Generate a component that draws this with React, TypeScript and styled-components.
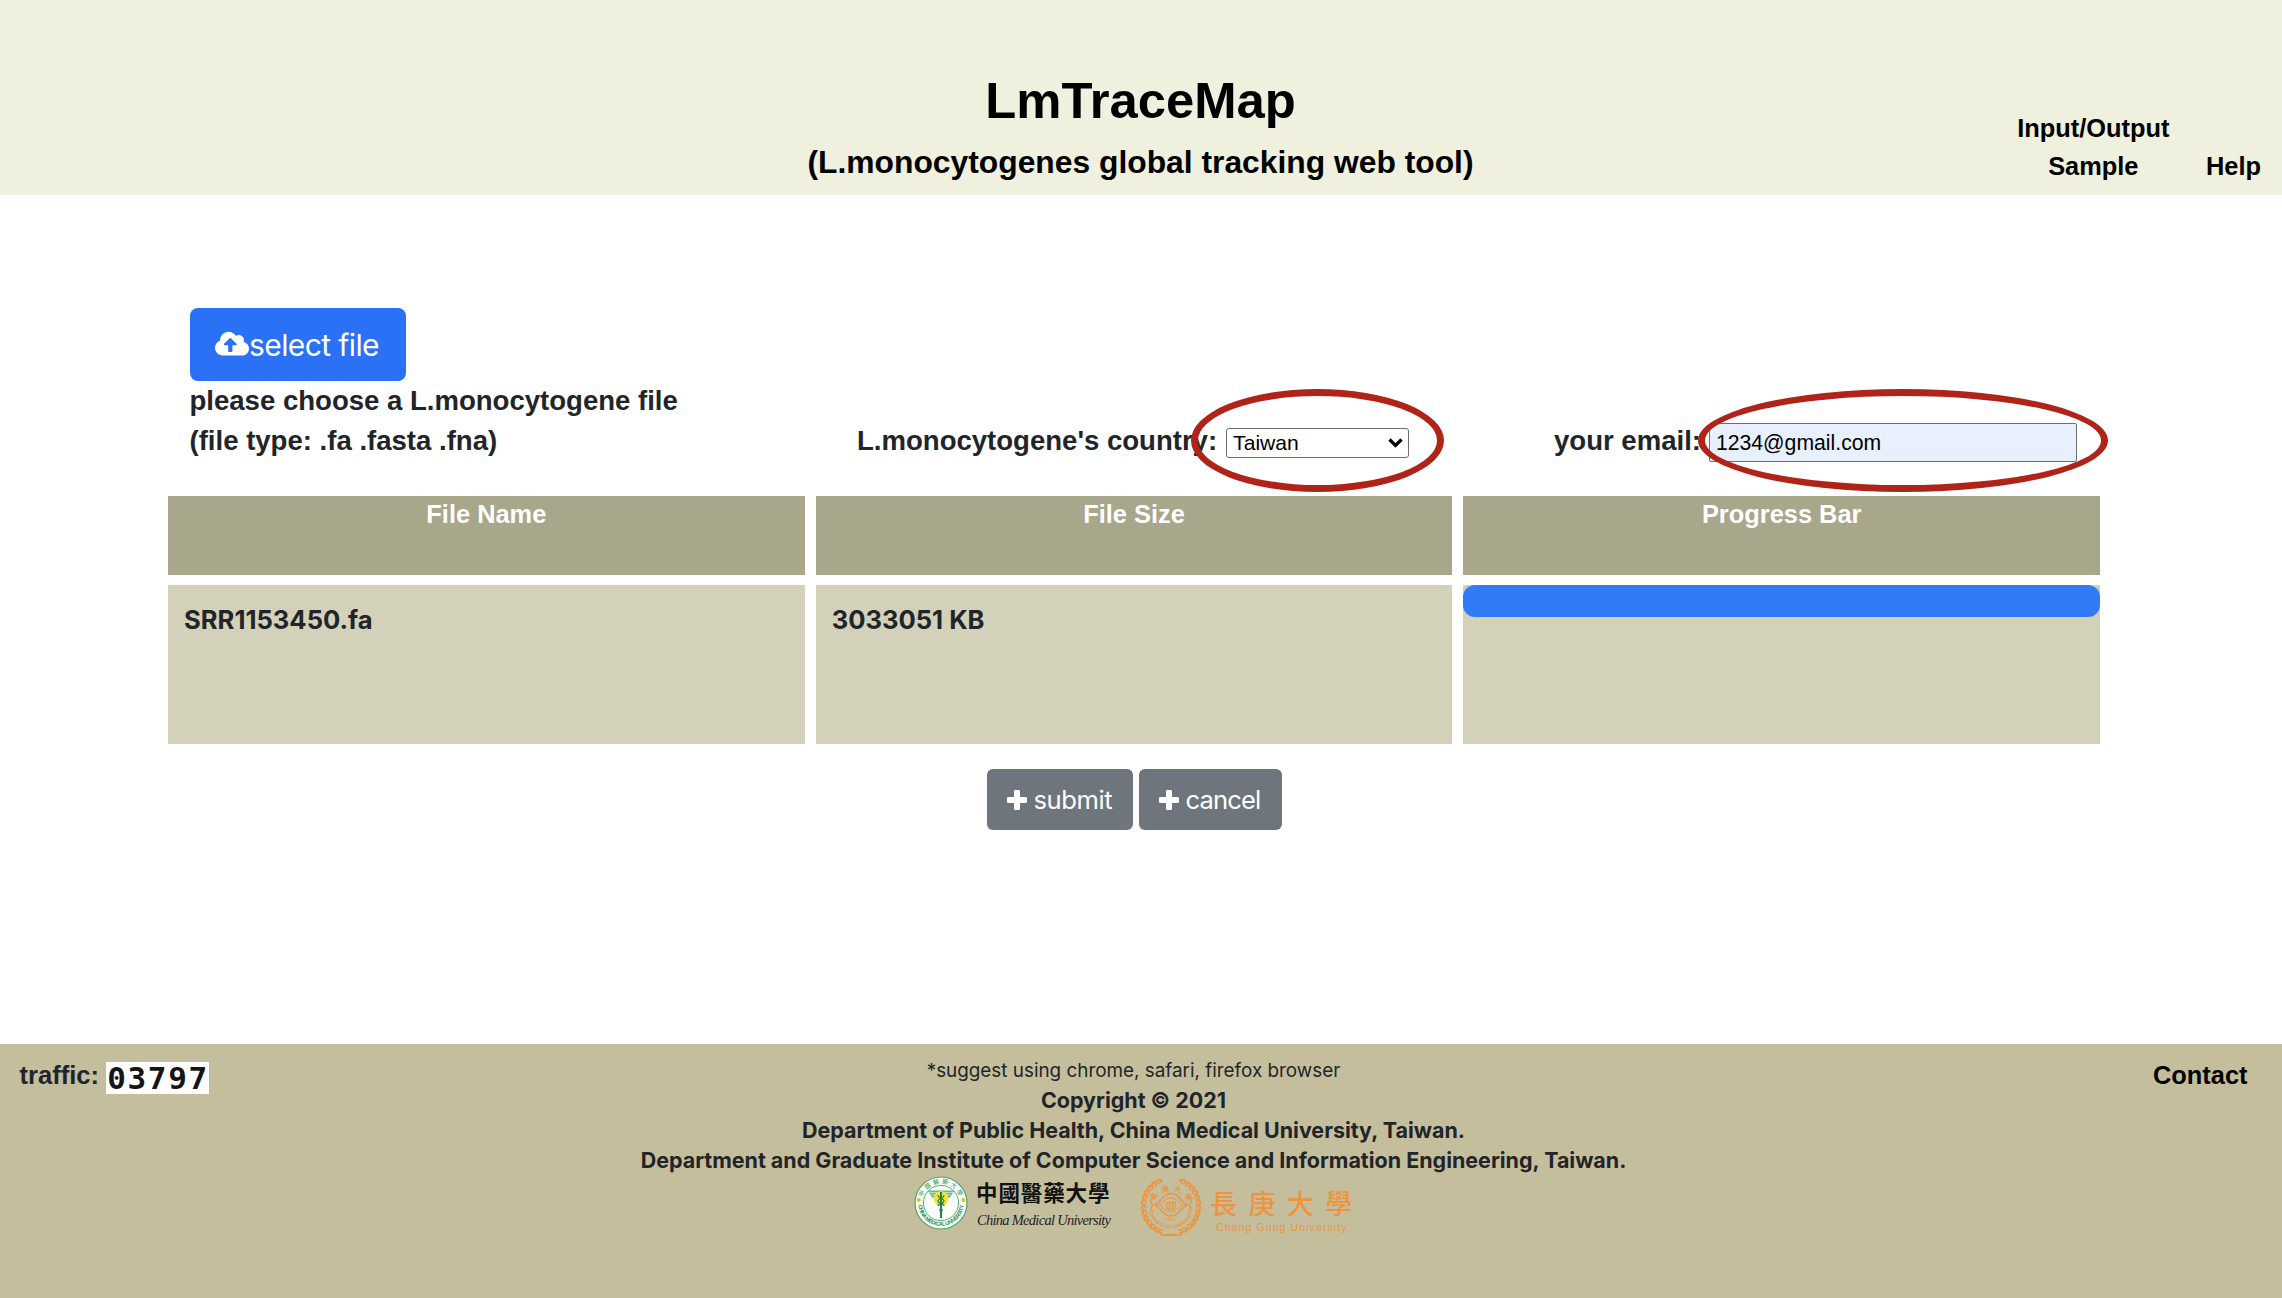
import React from 'react';
import styled, { createGlobalStyle } from 'styled-components';
import { FaCloudUploadAlt } from 'react-icons/fa';

const arial = '"Liberation Sans", Arial, sans-serif';
const system = 'Inter, "Liberation Sans", sans-serif';
const cjk = '"Noto Sans CJK TC", sans-serif';

const GlobalStyle = createGlobalStyle`
  *, *::before, *::after { box-sizing: border-box; }
  body { margin: 0; background: #fff; color: #212529; font-family: ${arial}; }
`;

const Page = styled.div`
  display: flex;
  flex-direction: column;
  height: 1298px;
  overflow: hidden;
`;

const Header = styled.header`
  display: grid;
  grid-template-columns: 1fr auto 1fr;
  height: 195px;
  background: #f0f0de;
  color: #000;
  font-weight: 700;
`;

const Titles = styled.div`
  grid-column: 2;
  padding: 71px 1px 0 0;
  text-align: center;
`;

const Title = styled.h1`
  margin: 0 0 11px;
  font-size: 50.8px;
  line-height: 60px;
`;

const Subtitle = styled.h2`
  margin: 0;
  font-size: 31.8px;
  line-height: 40px;
`;

const Nav = styled.nav`
  display: flex;
  justify-content: flex-end;
  align-items: flex-end;
  gap: 36.5px;
  padding: 0 21px 10px 0;
`;

const NavLink = styled.a`
  font-size: 25.4px;
  line-height: 38px;
  text-align: center;
  white-space: pre-line;
`;

const Main = styled.main`
  flex: 1;
  padding: 113px 182px 0 168px;
`;

const FormRow = styled.div`
  display: grid;
  grid-template-columns: 667.5px 697px 1fr;
  align-items: end;
  height: 153px;
  margin: 0 0 35px 21.5px;
`;

const FilePicker = styled.div`
  align-self: start;
`;

const SelectButton = styled.button`
  display: flex;
  align-items: center;
  width: 216px;
  height: 73px;
  margin-left: 0.5px;
  padding: 0 0 0 25px;
  border: 0;
  border-radius: 8px;
  background: #2b71f5;
  color: #fff;
  font: 400 30px ${system};
  letter-spacing: -0.6px;
  white-space: nowrap;
`;

const CloudIcon = styled(FaCloudUploadAlt)`
  flex: none;
  width: 34px;
  height: 27.2px;
  margin-top: -2px;
`;

const Label = styled.label`
  font-size: 27.55px;
  font-weight: 700;
  line-height: 39.9px;
  white-space: nowrap;
`;

const Hint = styled(Label).attrs({ as: 'p' })`
  margin: 0;
  white-space: pre-line;
`;

const Field = styled.div`
  display: flex;
  align-items: flex-end;
`;

const Control = styled.div<{ $width: number; $height: number; $gap: number; $drop: number }>`
  position: relative;
  width: ${p => p.$width}px;
  height: ${p => p.$height}px;
  margin: 0 0 ${p => -p.$drop}px ${p => p.$gap}px;
`;

const Select = styled.select`
  appearance: none;
  display: block;
  width: 100%;
  height: 100%;
  padding: 0 6px 1px;
  border: 1.5px solid #6f6f6f;
  border-radius: 3px;
  background: #fff;
  color: #000;
  font: 400 21.1px ${arial};
`;

const Chevron = styled.svg`
  position: absolute;
  right: 6px;
  top: 8px;
`;

const EmailInput = styled.input`
  display: block;
  width: 100%;
  height: 100%;
  padding: 0 6px;
  border: 1.5px solid #6f6f6f;
  border-radius: 2px;
  background: #e8effd;
  color: #000;
  font: 400 21.2px ${arial};
`;

const Ring = styled.span<{ $left: number; $top: number; $width: number }>`
  position: absolute;
  left: ${p => p.$left}px;
  top: ${p => p.$top}px;
  width: ${p => p.$width}px;
  height: 103px;
  border: 7.5px solid #b02318;
  border-radius: 50%;
  pointer-events: none;
`;

const Table = styled.div`
  display: grid;
  grid-template-columns: repeat(3, 1fr);
  grid-template-rows: 79px 159px;
  gap: 10px 11px;
`;

const HeadCell = styled.div`
  background: #a8a68b;
  color: #fff;
  font-size: 25.4px;
  font-weight: 700;
  line-height: 36px;
  text-align: center;
`;

const Cell = styled.div<{ $flush?: boolean }>`
  padding: ${p => (p.$flush ? '0' : '16px')};
  background: #d3d1b9;
  font: 700 25.6px/38.4px ${system};
`;

const Progress = styled.div`
  height: 32px;
  border-radius: 12px;
  background: #317cf6;
`;

const Actions = styled.div`
  display: flex;
  justify-content: center;
  gap: 6px;
  margin-top: 25px;
`;

const ActionButton = styled.button<{ $width: number; $tracking: number }>`
  display: flex;
  align-items: center;
  gap: 6.5px;
  width: ${p => p.$width}px;
  height: 61px;
  padding: 0 0 0 20.5px;
  border: 0;
  border-radius: 6px;
  background: #6e757d;
  color: #fff;
  font: 400 25.6px ${system};
  letter-spacing: ${p => p.$tracking}px;
`;

const Footer = styled.footer`
  display: grid;
  grid-template-columns: 1fr auto 1fr;
  height: 254px;
  padding: 0 34.5px 0 19.5px;
  background: #c5be9d;
`;

const Traffic = styled.div`
  display: flex;
  align-items: flex-start;
  padding-top: 18px;
  font-size: 25.6px;
  font-weight: 700;
  line-height: 27px;
`;

const Counter = styled.span`
  height: 32px;
  width: 103px;
  margin-left: 7px;
  padding-left: 1px;
  background: #fff;
  color: #151515;
  font: 700 31px/32px "DejaVu Sans Mono", monospace;
  letter-spacing: 1.7px;
`;

const Credits = styled.div`
  padding-top: 12px;
  font: 700 21.47px/30px ${system};
  text-align: center;
`;

const Line = styled.div``;

const Note = styled.div`
  margin-bottom: -1.5px;
  font-size: 18.87px;
  font-weight: 400;
  line-height: 30.5px;
`;

const Logos = styled.div`
  display: flex;
  justify-content: center;
  gap: 26px;
  padding-right: 1px;
`;

const Logo = styled.div<{ $gap: number }>`
  display: flex;
  align-items: flex-start;
  gap: ${p => p.$gap}px;
`;

const Emblem = styled.svg<{ $drop?: number }>`
  display: block;
  margin-top: ${p => p.$drop ?? 0}px;
`;

const NameBlock = styled.div`
  display: flex;
  flex-direction: column;
  text-align: left;
  white-space: nowrap;
`;

const CmuName = styled.span`
  width: 136px;
  margin-top: 3px;
  color: #111;
  font: 700 21.5px/28px ${cjk};
  letter-spacing: 0.9px;
`;

const CmuLatin = styled.span`
  width: 136px;
  margin-top: 5px;
  padding-left: 1px;
  color: #222;
  font: italic 400 14.5px/18px "Liberation Serif", serif;
  letter-spacing: -0.72px;
`;

const CguName = styled.span`
  width: 142px;
  margin-top: 12px;
  color: #ec9440;
  font: 500 27px/32px ${cjk};
  letter-spacing: 11.4px;
`;

const CguLatin = styled.span`
  margin: 2px 0 0 6px;
  color: #ec9440;
  font: 400 10.5px/12px ${arial};
  letter-spacing: 1.1px;
`;

const Contact = styled.a`
  justify-self: end;
  padding-top: 18px;
  color: #000;
  font-size: 25.4px;
  font-weight: 700;
  line-height: 27px;
`;

const PlusIcon = () => (
  <svg width="20" height="20" viewBox="0 0 20 20" fill="#fff">
    <rect x="7" y="0" width="6" height="20" rx="1.3" />
    <rect x="0" y="7" width="20" height="6" rx="1.3" />
  </svg>
);

const CmuEmblem = () => (
  <Emblem $drop={1} width="54" height="54" viewBox="0 0 54 54">
    <defs>
      <path id="cmu-low" d="M4.2 27 A22.8 22.8 0 0 0 49.8 27" />
      <path id="cmu-top" d="M7.5 27 A19.5 19.5 0 0 1 46.5 27" />
    </defs>
    <circle cx="27" cy="27" r="26" fill="#fbfdf8" stroke="#4aa471" strokeWidth="1.2" />
    <circle cx="27" cy="27" r="17.6" fill="none" stroke="#4aa471" strokeWidth="0.9" />
    <text fill="#2f9560" fontFamily="Liberation Sans" fontWeight="700" fontSize="5.6">
      <textPath href="#cmu-low" textLength="67" startOffset="2">CHINA MEDICAL UNIVERSITY</textPath>
    </text>
    <text fill="#6bb58b" fontFamily="Noto Sans CJK TC" fontSize="6">
      <textPath href="#cmu-top" textLength="48" startOffset="6">中國醫藥大學</textPath>
    </text>
    <circle cx="4.7" cy="24" r="2" fill="#c7cf2b" />
    <circle cx="49.3" cy="24" r="2" fill="#c7cf2b" />
    <path d="M13.5 14.5H40.5L36 21.5L31 23L28.5 30H25.5L23 23L18 21.5Z" fill="#6fb98f" />
    <path d="M15 16.5H39M17 18.8H37" stroke="#d8eee0" strokeWidth="0.7" />
    <path d="M27 15l4.500 1.500 2.500 3 .5 3.500-2 5-5.500 3-5.500-3-2-5 .5-3.500 2.500-3z" fill="#f1e534" />
    <path d="M27 16V42" stroke="#27804e" strokeWidth="2" />
    <path d="M24 19c0 4 6 3 6 6s-6 2-6 5M30 19c0 4-6 3-6 6s6 2 6 5" fill="none" stroke="#27804e" strokeWidth="1.1" />
    <path d="M25.2 33h3.600l-1.800 10z" fill="#27804e" />
  </Emblem>
);

const leaves = Array.from({ length: 13 }, (_, i) => 22 + i * 11.2);

const CguEmblem = () => (
  <Emblem $drop={4} width="66" height="58" viewBox="0 0 66 58">
    <defs>
      <path id="cgu-low" d="M10.5 27 A22.5 22.5 0 0 0 55.5 27" />
      <path id="cgu-top" d="M15 25 A19 19 0 0 1 51 25" />
    </defs>
    <g fill="#ec9440">
      {leaves.map(a => (
        <g key={a}>
          <g transform={`translate(33 27) rotate(${a})`}>
            <ellipse cx="0" cy="28.8" rx="3.6" ry="1.2" transform="rotate(18 0 28.8)" />
            <ellipse cx="0" cy="26" rx="2.8" ry="0.9" transform="rotate(-20 0 26)" />
          </g>
          <g transform={`translate(33 27) rotate(${-a})`}>
            <ellipse cx="0" cy="28.8" rx="3.6" ry="1.2" transform="rotate(-18 0 28.8)" />
            <ellipse cx="0" cy="26" rx="2.8" ry="0.9" transform="rotate(20 0 26)" />
          </g>
        </g>
      ))}
      <ellipse cx="33" cy="56" rx="11" ry="1.2" />
      <text fontFamily="Liberation Sans" fontWeight="700" fontSize="4.8">
        <textPath href="#cgu-low" textLength="60" startOffset="5">CHANG GUNG UNIVERSITY</textPath>
      </text>
      <text fontFamily="Noto Sans CJK TC" fontWeight="700" fontSize="7.5">
        <textPath href="#cgu-top" textLength="42" startOffset="3">長庚大學</textPath>
      </text>
      <text x="27" y="41.5" fontFamily="Liberation Sans" fontSize="4" letterSpacing="1">1987</text>
    </g>
    <g fill="none" stroke="#ec9440">
      <path d="M16 26C22 26 24 14.5 33 14.5S44 26 50 26C44 26 42 37 33 37S22 26 16 26Z" strokeWidth="1.6" />
      <path d="M21 26C25 25 27 19 33 19S41 25 45 26C41 27 39 33 33 33S25 27 21 26Z" strokeWidth="1" />
      <path d="M28.5 23.5V27Q29 31 33 31T37.5 27V23.5ZM31.5 24V30M34.5 24V30" strokeWidth="1.2" />
      <path d="M13.5 20q-2 2 0 4t0 4 2 4M52.5 20q2 2 0 4t0 4-2 4" strokeWidth="1.2" />
    </g>
  </Emblem>
);

export default function App() {
  return (
    <Page>
      <GlobalStyle />
      <Header>
        <Titles>
          <Title>LmTraceMap</Title>
          <Subtitle>(L.monocytogenes global tracking web tool)</Subtitle>
        </Titles>
        <Nav>
          <NavLink>{'Input/Output\nSample'}</NavLink>
          <NavLink>Help</NavLink>
        </Nav>
      </Header>
      <Main>
        <FormRow>
          <FilePicker>
            <SelectButton>
              <CloudIcon />
              select file
            </SelectButton>
            <Hint>{'please choose a L.monocytogene file\n(file type: .fa .fasta .fna)'}</Hint>
          </FilePicker>
          <Field>
            <Label>L.monocytogene's country:</Label>
            <Control $width={183} $height={30} $gap={9} $drop={-3}>
              <Select defaultValue="Taiwan">
                <option>Taiwan</option>
              </Select>
              <Chevron width="15" height="13" viewBox="0 0 15 13">
                <path d="M1.5 3.5L7.5 9.5L13.5 3.5" fill="none" stroke="#000" strokeWidth="3.2" />
              </Chevron>
              <Ring $left={-35.5} $top={-39} $width={253} />
            </Control>
          </Field>
          <Field>
            <Label>your email:</Label>
            <Control $width={368} $height={39} $gap={8} $drop={1}>
              <EmailInput defaultValue="1234@gmail.com" />
              <Ring $left={-10.5} $top={-34} $width={410} />
            </Control>
          </Field>
        </FormRow>
        <Table>
          <HeadCell>File Name</HeadCell>
          <HeadCell>File Size</HeadCell>
          <HeadCell>Progress Bar</HeadCell>
          <Cell>SRR1153450.fa</Cell>
          <Cell>3033051 KB</Cell>
          <Cell $flush>
            <Progress />
          </Cell>
        </Table>
        <Actions>
          <ActionButton $width={146} $tracking={-0.45}>
            <PlusIcon />
            submit
          </ActionButton>
          <ActionButton $width={143} $tracking={-0.9}>
            <PlusIcon />
            cancel
          </ActionButton>
        </Actions>
      </Main>
      <Footer>
        <Traffic>
          traffic:
          <Counter>03797</Counter>
        </Traffic>
        <Credits>
          <Note>*suggest using chrome, safari, firefox browser</Note>
          <Line>Copyright © 2021</Line>
          <Line>Department of Public Health, China Medical University, Taiwan.</Line>
          <Line>Department and Graduate Institute of Computer Science and Information Engineering, Taiwan.</Line>
          <Logos>
            <Logo $gap={8}>
              <CmuEmblem />
              <NameBlock>
                <CmuName>中國醫藥大學</CmuName>
                <CmuLatin>China Medical University</CmuLatin>
              </NameBlock>
            </Logo>
            <Logo $gap={6}>
              <CguEmblem />
              <NameBlock>
                <CguName>長庚大學</CguName>
                <CguLatin>Chang Gung University</CguLatin>
              </NameBlock>
            </Logo>
          </Logos>
        </Credits>
        <Contact>Contact</Contact>
      </Footer>
    </Page>
  );
}
